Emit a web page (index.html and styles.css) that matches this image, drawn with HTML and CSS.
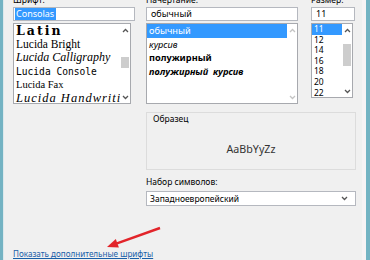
FILE: index.html
```html
<!DOCTYPE html>
<html lang="ru">
<head>
    <meta charset="UTF-8">
    <meta name="viewport" content="width=device-width, initial-scale=1.0">
    <title>Шрифт</title>
    <link rel="stylesheet" href="styles.css">
</head>
<body>
    <div class="window">
        <div class="dialog">
            <div class="pickers">
                <div class="col col-font">
                    <div class="cap">Шрифт:</div>
                    <div class="field"><span class="picked">Consolas</span></div>
                    <div class="listbox">
                        <ul class="items">
                            <li class="f-latin">Latin</li>
                            <li class="f-bright">Lucida Bright</li>
                            <li class="f-calli">Lucida Calligraphy</li>
                            <li class="f-console">Lucida Console</li>
                            <li class="f-fax">Lucida Fax</li>
                            <li class="f-hand">Lucida Handwriting</li>
                        </ul>
                        <div class="scroll">
                            <svg class="chev" width="7" height="5" viewBox="0 0 7 5"><polyline points="1,4 3.5,1.5 6,4"/></svg>
                            <div class="thumb thumb-font"></div>
                            <svg class="chev" width="7" height="5" viewBox="0 0 7 5"><polyline points="1,1 3.5,3.5 6,1"/></svg>
                        </div>
                    </div>
                </div>
                <div class="col col-style">
                    <div class="cap">Начертание:</div>
                    <div class="field">обычный</div>
                    <div class="listbox">
                        <ul class="items">
                            <li class="on">обычный</li>
                            <li class="s-italic">курсив</li>
                            <li class="s-bold">полужирный</li>
                            <li class="s-bold s-italic">полужирный&nbsp; курсив</li>
                        </ul>
                        <div class="scroll off">
                            <svg class="chev" width="7" height="5" viewBox="0 0 7 5"><polyline points="1,4 3.5,1.5 6,4"/></svg>
                            <svg class="chev" width="7" height="5" viewBox="0 0 7 5"><polyline points="1,1 3.5,3.5 6,1"/></svg>
                        </div>
                    </div>
                </div>
                <div class="col col-size">
                    <div class="cap">Размер:</div>
                    <div class="field">11</div>
                    <div class="listbox">
                        <ul class="items">
                            <li class="on">11</li>
                            <li>12</li>
                            <li>14</li>
                            <li>16</li>
                            <li>18</li>
                            <li>20</li>
                            <li>22</li>
                        </ul>
                        <div class="scroll">
                            <svg class="chev" width="7" height="5" viewBox="0 0 7 5"><polyline points="1,4 3.5,1.5 6,4"/></svg>
                            <div class="thumb thumb-size"></div>
                            <svg class="chev" width="7" height="5" viewBox="0 0 7 5"><polyline points="1,1 3.5,3.5 6,1"/></svg>
                        </div>
                    </div>
                </div>
            </div>

            <div class="lower">
                <div class="sample">
                    <div class="sample-cap">Образец</div>
                    <div class="sample-text">AaBbYyZz</div>
                </div>
                <div class="charset-cap">Набор символов:</div>
                <div class="select">
                    <span>Западноевропейский</span>
                    <svg class="chev dark" width="7" height="5" viewBox="0 0 7 5"><polyline points="1,1 3.5,3.5 6,1"/></svg>
                </div>
            </div>

            <a class="more" href="#">Показать дополнительные шрифты</a>

            <svg class="pointer" width="66" height="32" viewBox="0 0 66 32">
                <line x1="60" y1="6" x2="17" y2="21.3" />
                <polygon points="7,25 18.9,25.5 15.8,17.1" />
            </svg>
        </div>
        <div class="edge"></div>
    </div>
</body>
</html>
```

FILE: styles.css
```css
* {
box-sizing: border-box;
margin: 0;
padding: 0;
}

body {
background: #f0f0f0;
font-family: "Noto Sans", "Open Sans", sans-serif;
font-size: 8.5px;
color: #000;
}

.window {
width: 370px;
height: 260px;
display: flex;
overflow: hidden;
border-left: 3px solid #74b3c3;
}

.dialog {
position: relative;
flex: 1;
display: flex;
flex-direction: column;
background: #f0f0f0;
border-left: 1px solid #dde9ec;
padding-left: 9px;
margin-top: -7px;
height: 268px;
}

.edge {
width: 8px;
border-left: 4px solid #f7f3f5;
background: #74b3c3;
}

.pickers {
display: flex;
}

.col {
display: flex;
flex-direction: column;
}

.col-font {
width: 122px;
margin-right: 11px;
}

.col-style {
width: 152px;
margin-right: 13px;
}

.col-size {
width: 44px;
}

.cap {
height: 14px;
line-height: 14px;
}

.field {
height: 14px;
line-height: 12px;
padding: 0 4px;
font-size: 9px;
color: #000;
background: #fff;
border: 1px solid #b5b8bf;
}

.picked {
display: inline-block;
background: #3399ff;
color: #fff;
margin-left: -3px;
padding: 0 2px 0 1px;
line-height: 12px;
}

.listbox {
display: flex;
margin-top: 2px;
height: 81px;
background: #fff;
border: 1px solid #a7a9ae;
}

.col-font .listbox {
width: 118px;
}

.col-size .listbox {
width: 42px;
height: 75px;
}

.items {
flex: 1;
list-style: none;
overflow: hidden;
white-space: nowrap;
}

.items li {
height: 13.6px;
line-height: 13.6px;
padding-left: 2px;
}

.col-style .items li {
font-size: 9.2px;
}

.col-size .items li {
height: 10.6px;
line-height: 10.6px;
font-size: 8.5px;
}

.items li.on {
background: #3399ff;
color: #fff;
}

.s-italic {
font-style: italic;
}

.s-bold {
font-weight: bold;
}

.f-latin {
font-family: "DejaVu Serif", serif;
font-weight: 900;
font-size: 12.5px;
letter-spacing: 2px;
}

.f-bright {
font-family: "Liberation Serif", serif;
font-size: 11.5px;
}

.f-fax {
font-family: "Liberation Serif", serif;
font-size: 10.5px;
}

.f-calli {
font-family: "Liberation Serif", serif;
font-style: italic;
font-size: 12px;
}

.f-console {
font-family: "DejaVu Sans Mono", monospace;
font-size: 9.6px;
}

.f-hand {
font-family: "Liberation Serif", serif;
font-style: italic;
font-size: 12.5px;
letter-spacing: 1px;
}

.scroll {
width: 10px;
display: flex;
flex-direction: column;
align-items: center;
padding: 4px 0 3px;
}

.scroll .chev:last-child {
margin-top: auto;
}

.thumb {
width: 8px;
background: #cdcdcd;
}

.thumb-font {
height: 11px;
margin-top: 24px;
}

.thumb-size {
height: 22px;
margin-top: 11px;
}

.chev polyline {
fill: none;
stroke: #555;
stroke-width: 1.3;
}

.scroll.off .chev polyline {
stroke: #c4c4c4;
}

.lower {
margin-left: 133px;
width: 210px;
margin-top: 8px;
}

.sample {
height: 58px;
border: 1px solid #dcdcdc;
}

.sample-cap {
line-height: 12px;
padding-left: 6px;
}

.sample-text {
margin-top: 17px;
line-height: 14px;
font-size: 10.7px;
text-align: center;
color: #333;
}

.charset-cap {
margin-top: 5px;
line-height: 14px;
}

.select {
margin-top: 2px;
height: 15px;
display: flex;
align-items: center;
justify-content: space-between;
padding: 0 7px 0 3px;
background: #fff;
border: 1px solid #b5b8bf;
}

.more {
margin-top: auto;
line-height: 14px;
color: #1a5fa8;
font-size: 8.1px;
width: max-content;
}

.pointer {
position: absolute;
left: 96px;
top: 229px;
}

.pointer line {
stroke: #e2242a;
stroke-width: 2.4;
}

.pointer polygon {
fill: #e2242a;
}
```
